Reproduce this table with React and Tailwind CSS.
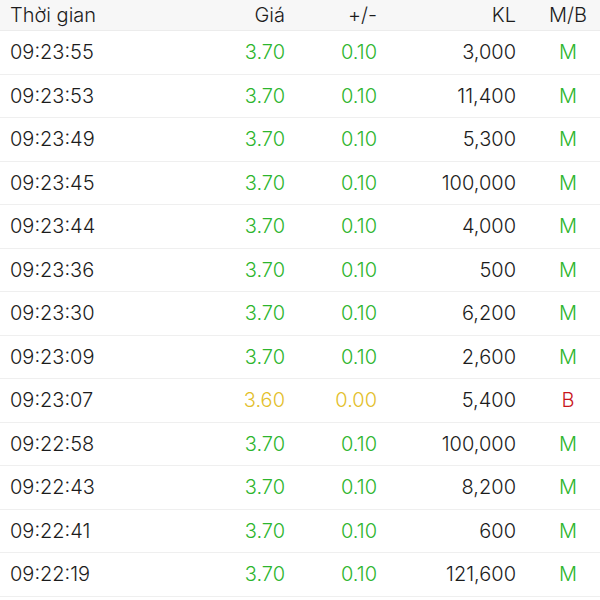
const rows = [
  { t: "09:23:55", p: "3.70", c: "0.10", kl: "3,000", mb: "M" },
  { t: "09:23:53", p: "3.70", c: "0.10", kl: "11,400", mb: "M" },
  { t: "09:23:49", p: "3.70", c: "0.10", kl: "5,300", mb: "M" },
  { t: "09:23:45", p: "3.70", c: "0.10", kl: "100,000", mb: "M" },
  { t: "09:23:44", p: "3.70", c: "0.10", kl: "4,000", mb: "M" },
  { t: "09:23:36", p: "3.70", c: "0.10", kl: "500", mb: "M" },
  { t: "09:23:30", p: "3.70", c: "0.10", kl: "6,200", mb: "M" },
  { t: "09:23:09", p: "3.70", c: "0.10", kl: "2,600", mb: "M" },
  { t: "09:23:07", p: "3.60", c: "0.00", kl: "5,400", mb: "B" },
  { t: "09:22:58", p: "3.70", c: "0.10", kl: "100,000", mb: "M" },
  { t: "09:22:43", p: "3.70", c: "0.10", kl: "8,200", mb: "M" },
  { t: "09:22:41", p: "3.70", c: "0.10", kl: "600", mb: "M" },
  { t: "09:22:19", p: "3.70", c: "0.10", kl: "121,600", mb: "M" },
];

const App = () => {
  return (
    <div
      className="w-[600px] h-[600px] overflow-hidden bg-white text-[20px] font-light text-[#1c1c1c]"
      style={{ fontFamily: "Inter, 'Noto Sans', sans-serif" }}
    >
      <div className="flex items-center h-[31px] pl-[10px] bg-[#f7f7f7] border-b border-[#ececec]">
        <div className="w-[190px]">Thời gian</div>
        <div className="w-[85px] text-right">Giá</div>
        <div className="w-[92px] text-right">+/-</div>
        <div className="w-[139px] text-right">KL</div>
        <div className="w-[52px] ml-[26px] text-center">M/B</div>
      </div>
      {rows.map((r) => {
        const up = r.mb === "M";
        const color = up ? "text-[#2db52d]" : "text-[#e3c02c]";
        return (
          <div
            key={r.t}
            className="flex items-center h-[43.5px] pl-[10px] border-b border-[#efefef]"
          >
            <div className="w-[190px]">{r.t}</div>
            <div className={`w-[85px] text-right ${color}`}>{r.p}</div>
            <div className={`w-[92px] text-right ${color}`}>{r.c}</div>
            <div className="w-[139px] text-right">{r.kl}</div>
            <div
              className={`w-[52px] ml-[26px] text-center ${
                up ? "text-[#2db52d]" : "text-[#c8151b]"
              }`}
            >
              {r.mb}
            </div>
          </div>
        );
      })}
    </div>
  );
};

export default App;
